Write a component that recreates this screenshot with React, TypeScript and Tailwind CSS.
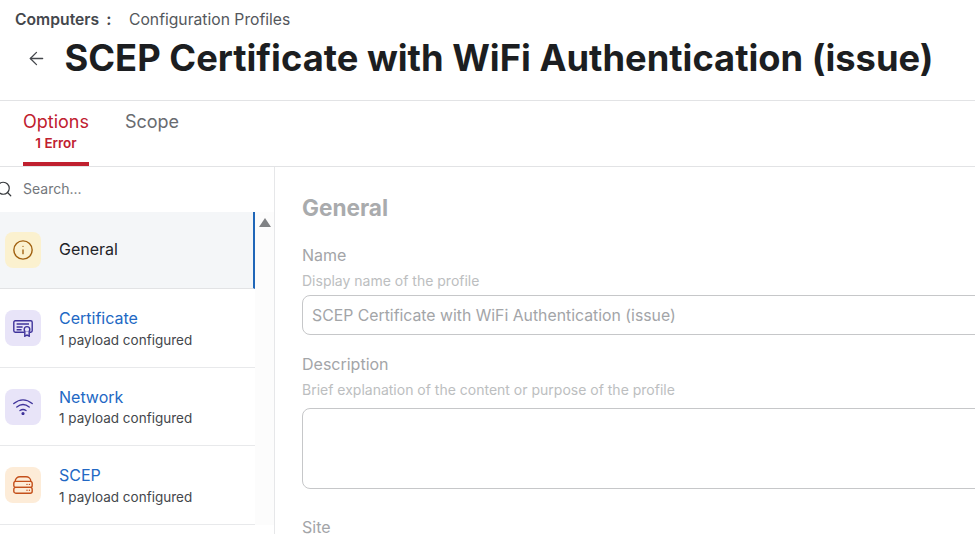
import { ArrowLeft, Info, Search } from "lucide-react";
import type { ReactNode } from "react";

const CertIcon = () => (
  <svg width="20" height="17" viewBox="0 0 20 17" fill="none" stroke="currentColor" strokeWidth="1.4">
    <path d="M11 12.2H2.2a1.4 1.4 0 0 1-1.4-1.4V2.2A1.4 1.4 0 0 1 2.2.8h15.6a1.4 1.4 0 0 1 1.4 1.4v8.6a1.4 1.4 0 0 1-1.4 1.4H17" />
    <path d="M3.6 4h12.4M3.6 7h6M3.6 9.8h5" />
    <circle cx="14" cy="9.4" r="2.8" fill="#e8e4f8" />
    <path d="M11.8 11.6v4.6l2.2-1.1 2.2 1.1v-4.6" fill="#e8e4f8" />
  </svg>
);

const WifiIcon = () => (
  <svg width="20" height="17" viewBox="0 0 20 17" fill="none" stroke="currentColor" strokeWidth="1.4" strokeLinecap="round">
    <path d="M.8 5.5Q10-1.800 19.200 5.500" />
    <path d="M3.800 9Q10 4 16.200 9" />
    <path d="M7 12.500Q10 10.500 13 12.500" />
    <circle cx="10" cy="15.600" r="0.9" fill="currentColor" />
  </svg>
);

const ServerIcon = () => (
  <svg width="20" height="18" viewBox="0 0 20 18" fill="none" stroke="currentColor" strokeWidth="1.4">
    <path d="M2.200 6V5.200C2.200 2.600 4.500.8 7 .8h6c2.500 0 4.800 1.800 4.800 4.400V6" />
    <rect x=".8" y="5.400" width="18.400" height="6" rx="2" />
    <rect x=".8" y="11.400" width="18.400" height="5.800" rx="2" />
    <path d="M14 8.400h.01M16.400 8.400h.01M14 14.300h.01M16.400 14.300h.01" strokeLinecap="round" />
  </svg>
);

const payloads: { name: string; bg: string; color: string; icon: ReactNode; h: string; textGap: string }[] = [
  { name: "Certificate", bg: "bg-[#e8e4f8]", color: "text-[#3f339b]", icon: <CertIcon />, h: "h-[79px]", textGap: "mt-[3px]" },
  { name: "Network", bg: "bg-[#e8e4f8]", color: "text-[#3f339b]", icon: <WifiIcon />, h: "h-[78px]", textGap: "mt-[2px]" },
  { name: "SCEP", bg: "bg-[#fdecd8]", color: "text-[#c4501b]", icon: <ServerIcon />, h: "h-[79px]", textGap: "mt-[3px]" },
];

export default function App() {
  return (
    <div className="h-[534px] w-[975px] overflow-hidden bg-white font-['Inter',sans-serif] text-[#1f2328]">
      <header className="h-[101px] border-b border-[#e2e3e5]">
        <div className="flex h-[38px] items-center pl-[15px] pt-px text-[15.7px]">
          <span className="w-[114px] font-semibold text-[#44474c]">
            Computers<span className="ml-[7px] font-bold">:</span>
          </span>
          <span className="text-[#54575c]">Configuration Profiles</span>
        </div>
        <div className="flex items-center pl-[26px]">
          <ArrowLeft size={21} strokeWidth={1.5} className="text-[#44474c]" />
          <h1 className="ml-[17.500px] text-[36.3px] leading-10 font-bold whitespace-nowrap text-[#1c1e21]">
            SCEP Certificate with WiFi Authentication (issue)
          </h1>
        </div>
      </header>

      <nav className="flex h-[66px] border-b border-[#e2e3e5] pl-[23px]">
        <div className="flex h-[65px] flex-col items-center border-b-4 border-[#c0202f] pt-[9px] text-[#c0202f]">
          <span className="text-[18px] leading-6">Options</span>
          <span className="text-[13.500px] leading-[18px] font-semibold">1 Error</span>
        </div>
        <div className="ml-9 pt-[9px] text-[18px] leading-6 text-[#686b70]">Scope</div>
      </nav>

      <div className="flex">
        <aside className="h-[367px] w-[275px] shrink-0 border-r border-[#e6e7e9]">
          <div className="-ml-[5px] flex h-[43px] items-center gap-[10px] text-[14px] text-[#74777c]">
            <Search size={18} strokeWidth={1.6} className="text-[#35383c]" />
            <span>Search...</span>
          </div>
          <div className="mt-[2px] flex">
            <div className="w-[255px]">
              <div className="flex h-[77px] items-center gap-[18px] border-r-2 border-b border-r-[#1f66b8] border-b-[#e2e3e5] bg-[#f4f6f8] pl-[5px]">
                <div className="flex size-9 items-center justify-center rounded-lg bg-[#fbf1cf] text-[#a0600f]">
                  <Info size={22} strokeWidth={1.5} />
                </div>
                <span className="pb-[2px] text-[16px]">General</span>
              </div>
              {payloads.map((p) => (
                <div key={p.name} className={`flex ${p.h} items-center gap-[18px] border-b border-[#e8e9eb] pl-[5px]`}>
                  <div className={`flex size-9 items-center justify-center rounded-lg ${p.bg} ${p.color}`}>{p.icon}</div>
                  <div>
                    <div className="text-[16px] leading-5 text-[#2268c4]">{p.name}</div>
                    <div className={`${p.textGap} text-[13.500px] leading-[18px] text-[#44474c]`}>1 payload configured</div>
                  </div>
                </div>
              ))}
            </div>
            <div className="flex w-[19px] justify-center bg-[#fcfcfc] pt-[6px]">
              <div className="h-0 w-0 border-x-[6px] border-b-[9px] border-x-transparent border-b-[#808285]" />
            </div>
          </div>
        </aside>

        <main className="min-w-0 flex-1 pl-[27px] pt-[26px] text-[#a3a5a8]">
          <h2 className="text-[22.600px] leading-[30px] font-bold text-[#a9abad]">General</h2>
          <div className="mt-[22px] text-[16px] leading-5">Name</div>
          <div className="mt-[7px] text-[14px] leading-[18px] text-[#bcbec0]">Display name of the profile</div>
          <div className="mt-[5px] -mr-4 flex h-10 items-center rounded-lg border border-[#c6c7c9] pl-[9px] pt-[2px] text-[15.800px]">
            SCEP Certificate with WiFi Authentication (issue)
          </div>
          <div className="mt-[19px] text-[16px] leading-5">Description</div>
          <div className="mt-[7px] text-[14px] leading-[18px] text-[#bcbec0]">
            Brief explanation of the content or purpose of the profile
          </div>
          <div className="mt-[9px] -mr-4 h-[81px] rounded-lg border border-[#c6c7c9]" />
          <div className="mt-[28px] text-[16px] leading-5">Site</div>
        </main>
      </div>
    </div>
  );
}
